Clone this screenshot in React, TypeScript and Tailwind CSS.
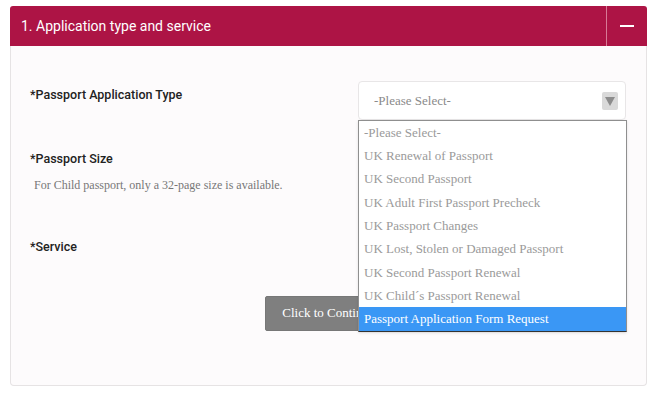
import React from "react";

const options = [
  "-Please Select-",
  "UK Renewal of Passport",
  "UK Second Passport",
  "UK Adult First Passport Precheck",
  "UK Passport Changes",
  "UK Lost, Stolen or Damaged Passport",
  "UK Second Passport Renewal",
  "UK Child´s Passport Renewal",
  "Passport Application Form Request",
];

const serif = "font-['Liberation_Serif',serif]";
const sans = "font-['Roboto','Liberation_Sans',sans-serif]";

export default function App() {
  return (
    <div className="w-[660px] h-[400px] bg-white pt-[6px] pl-[10px]">
      <div className="w-[637px]">
        <div className="flex h-[40px] bg-[#ad1445] rounded-t-[3px]">
          <div className={`flex-1 flex items-center pl-[11px] text-white text-[14px] ${sans}`}>
            1. Application type and service
          </div>
          <div className="w-[41px] border-l border-[#d77a96] flex items-center justify-center">
            <div className="w-[14px] h-[2px] bg-white" />
          </div>
        </div>
        <div className="relative h-[340px] bg-[#fdfbfc] border border-t-0 border-[#e6e3e4] rounded-b-[4px] px-[19px]">
          <div className="grid grid-cols-[328px_268px]">
            <div className={`pt-[40px] text-[12.5px] font-medium text-[#222] ${sans}`}>*Passport Application Type</div>
            <div className="pt-[35px]">
              <div className="h-[39px] border border-[#e8e6e7] rounded-[4px] bg-white flex items-center justify-between pl-[15px] pr-[7px]">
                <span className={`text-[13px] text-[#8a8a8a] ${serif}`}>-Please Select-</span>
                <div className="w-[16px] h-[18px] bg-[#d9d9d9] rounded-[2px] flex items-center justify-center">
                  <svg width="10" height="10" viewBox="0 0 10 10">
                    <path d="M0 1 L10 1 L5 10 Z" fill="#8c8c8c" />
                  </svg>
                </div>
              </div>
            </div>
          </div>
          <div className={`mt-[30px] text-[12.5px] font-medium text-[#222] ${sans}`}>*Passport Size</div>
          <div className={`mt-[7px] pl-[4px] text-[12px] text-[#777] ${serif}`}>
            For Child passport, only a 32-page size is available.
          </div>
          <div className={`mt-[44px] text-[12.5px] font-medium text-[#222] ${sans}`}>*Service</div>
          <div className="flex justify-center mt-[39px]">
            <button className={`h-[35px] px-[16px] bg-[#7f7f7f] border border-[#777] rounded-[2px] text-white text-[13px] ${serif}`}>
              Click to Continue
            </button>
          </div>
          <div className="absolute left-[347px] top-[74px] w-[269px] bg-white border border-[#8f8f8f] border-b-[#333] shadow-sm">
            {options.map((o, i) => (
              <div
                key={o}
                className={`h-[23.3px] pl-[5px] flex items-center text-[13px] ${serif} ${
                  i === options.length - 1 ? "bg-[#3a97f5] text-white" : "text-[#9a9a9a]"
                }`}
              >
                {o}
              </div>
            ))}
          </div>
        </div>
      </div>
    </div>
  );
}
